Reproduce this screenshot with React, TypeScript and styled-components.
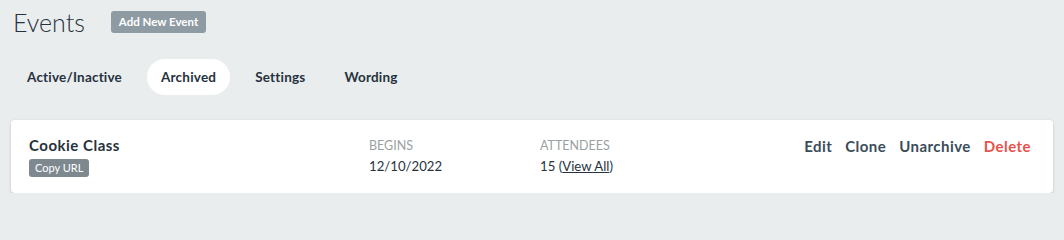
import React from 'react'
import styled, { createGlobalStyle } from 'styled-components'

const GlobalStyle = createGlobalStyle`
  html, body {
    margin: 0;
    padding: 0;
    background: #eaedee;
    font-family: Lato, 'Open Sans', Arial, sans-serif;
    color: #2b3440;
  }
`

const Page = styled.div`
  padding: 8px 11px 0 11px;
  width: 1042px;
`

const Header = styled.div`
  display: flex;
  align-items: center;
  gap: 26px;
  padding-left: 2px;
  height: 28px;
`

const Title = styled.h1`
  margin: 0;
  font-size: 25px;
  font-weight: 300;
  color: #26323d;
`

const SmallButton = styled.button<{ $tone?: 'light' | 'dark' }>`
  border: 0;
  border-radius: 3px;
  background: ${(p) => (p.$tone === 'dark' ? '#7e898f' : '#8f9ba3')};
  color: #fff;
  font-family: inherit;
  font-weight: ${(p) => (p.$tone === 'dark' ? 400 : 700)};
  font-size: ${(p) => (p.$tone === 'dark' ? '11px' : '11.5px')};
  padding: ${(p) => (p.$tone === 'dark' ? '2px 6px' : '4px 8px')};
  line-height: 14px;
  cursor: pointer;
`

const Tabs = styled.nav`
  display: flex;
  gap: 11px;
  margin-top: 23px;
  padding-left: 2px;
`

const Tab = styled.button<{ $active?: boolean }>`
  border: 0;
  height: 36px;
  padding: 0 14px;
  border-radius: 18px;
  background: ${(p) => (p.$active ? '#fff' : 'transparent')};
  font-family: inherit;
  font-weight: 700;
  font-size: 13.5px;
  letter-spacing: 0.2px;
  color: #26323d;
  cursor: pointer;
`

const Card = styled.div`
  margin-top: 25px;
  background: #fff;
  border-radius: 4px;
  box-shadow: 0 1px 3px rgba(0, 0, 0, 0.18);
  height: 73px;
  box-sizing: border-box;
  padding: 16px 22px 0 18px;
  display: grid;
  grid-template-columns: 340px 171px 1fr auto;
  align-items: start;
`

const NameCol = styled.div`
  display: flex;
  flex-direction: column;
  align-items: flex-start;
  gap: 5px;
`

const EventName = styled.div`
  font-size: 15px;
  font-weight: 700;
  letter-spacing: 0.5px;
  color: #26323d;
  line-height: 18px;
`

const Field = styled.div`
  display: flex;
  flex-direction: column;
  gap: 5px;
  padding-top: 2px;
`

const Label = styled.div`
  font-size: 12.5px;
  color: #9a9fa3;
  text-transform: uppercase;
  line-height: 15px;
`

const Value = styled.div`
  font-size: 13.2px;
  color: #26323d;
  line-height: 17px;
`

const ValueLink = styled.a`
  color: #26323d;
  text-decoration: underline;
`

const Actions = styled.div`
  display: flex;
  gap: 13px;
  padding-top: 1px;
`

const Action = styled.a<{ $danger?: boolean }>`
  font-size: 15px;
  font-weight: 700;
  letter-spacing: 0.45px;
  color: ${(p) => (p.$danger ? '#e8534d' : '#3b4c5a')};
  text-decoration: none;
  line-height: 18px;
  cursor: pointer;
`

const tabs = ['Active/Inactive', 'Archived', 'Settings', 'Wording']

export default function App() {
  return (
    <>
      <GlobalStyle />
      <Page>
        <Header>
          <Title>Events</Title>
          <SmallButton>Add New Event</SmallButton>
        </Header>
        <Tabs>
          {tabs.map((t) => (
            <Tab key={t} $active={t === 'Archived'}>
              {t}
            </Tab>
          ))}
        </Tabs>
        <Card>
          <NameCol>
            <EventName>Cookie Class</EventName>
            <SmallButton $tone="dark">Copy URL</SmallButton>
          </NameCol>
          <Field>
            <Label>Begins</Label>
            <Value>12/10/2022</Value>
          </Field>
          <Field>
            <Label>Attendees</Label>
            <Value>
              15 (<ValueLink>View All</ValueLink>)
            </Value>
          </Field>
          <Actions>
            <Action>Edit</Action>
            <Action>Clone</Action>
            <Action>Unarchive</Action>
            <Action $danger>Delete</Action>
          </Actions>
        </Card>
      </Page>
    </>
  )
}
